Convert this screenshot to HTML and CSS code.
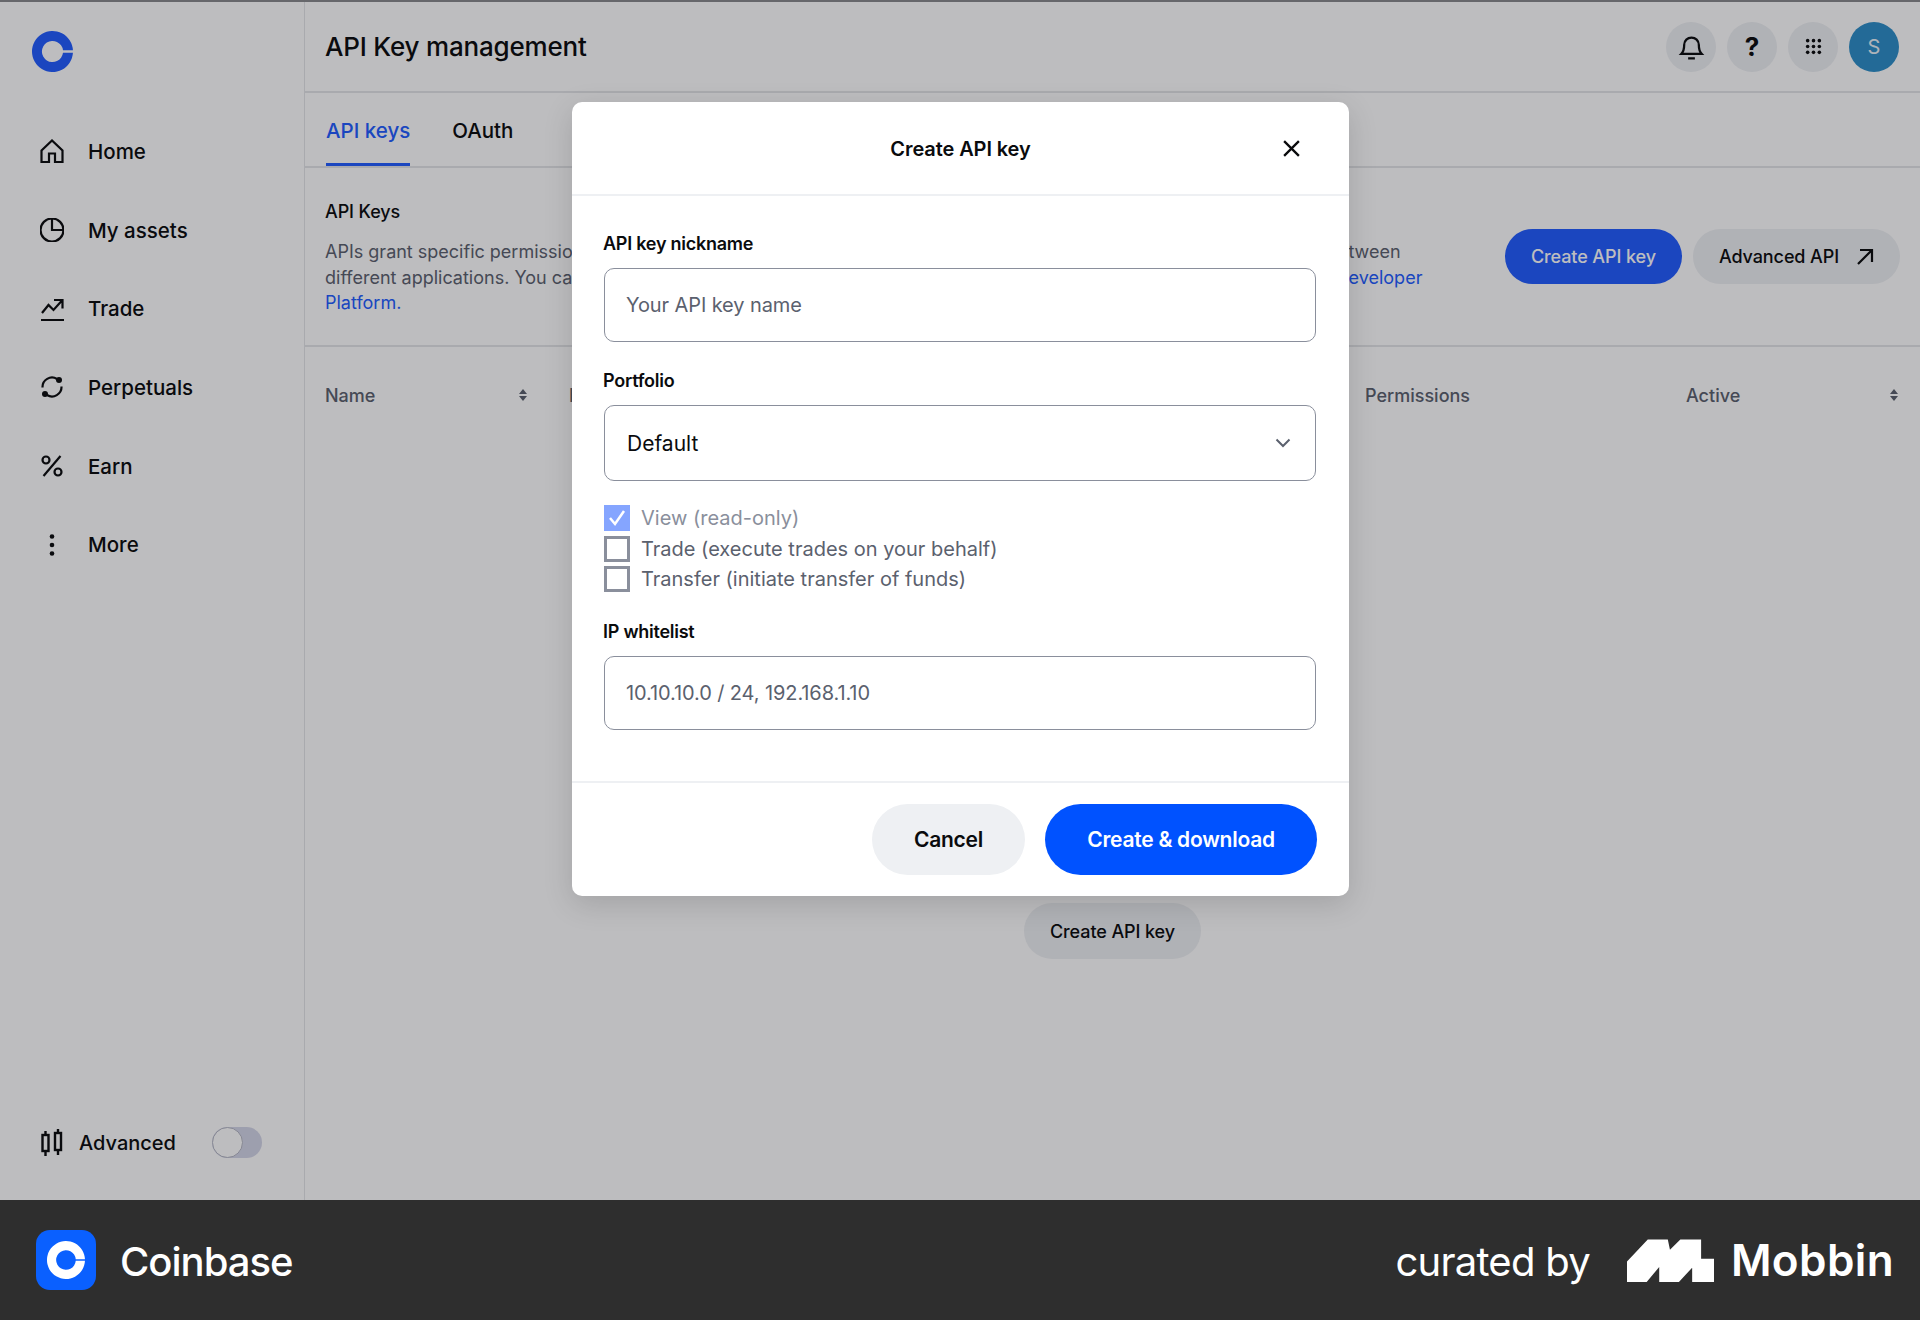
FILE: index.html
```html
<!DOCTYPE html>
<html lang="en">
<head>
    <meta charset="UTF-8">
    <meta name="viewport" content="width=device-width, initial-scale=1.0">
    <title>API Key management</title>
    <link rel="stylesheet" href="styles.css">
</head>
<body>
    <div class="app">
        <aside class="sidebar">
            <svg class="logo" viewBox="0 0 24 24"><path fill-rule="evenodd" d="M23.97 11.2A12 12 0 1 0 23.97 12.8H18.15A6.2 6.2 0 1 1 18.15 11.2Z"/></svg>
            <nav class="nav">
                <a class="nav-item">
                    <svg class="icon" viewBox="0 0 24 24"><path d="M1.5 11.5 12 1.5l10.500 10V23H15V14.500H9V23H1.500Z"/></svg>
                    <span>Home</span>
                </a>
                <a class="nav-item">
                    <svg class="icon" viewBox="0 0 24 24"><circle cx="12" cy="12" r="11.500"/><path d="M12 1v11h11"/></svg>
                    <span>My assets</span>
                </a>
                <a class="nav-item">
                    <svg class="icon" viewBox="0 0 24 24"><path d="M1 23h23M2 16l6.500-8 5 5 8.500-9.500M14 3h8.500v8.500"/></svg>
                    <span>Trade</span>
                </a>
                <a class="nav-item">
                    <svg class="icon" viewBox="0 0 24 24"><path d="M2.500 12.500A9.500 9.500 0 0 1 17 4M21.500 11.500A9.500 9.500 0 0 1 7 20"/><circle class="solid" cx="19" cy="5" r="3"/><circle class="solid" cx="5" cy="19" r="3"/></svg>
                    <span>Perpetuals</span>
                </a>
                <a class="nav-item">
                    <svg class="icon" viewBox="0 0 24 24"><path d="M20.500 2 3.500 22"/><circle cx="6" cy="6" r="3.500"/><circle cx="18" cy="18" r="3.500"/></svg>
                    <span>Earn</span>
                </a>
                <a class="nav-item">
                    <svg class="icon" viewBox="0 0 24 24"><circle class="solid" cx="12" cy="3.500" r="2.300"/><circle class="solid" cx="12" cy="12" r="2.300"/><circle class="solid" cx="12" cy="20.500" r="2.300"/></svg>
                    <span>More</span>
                </a>
            </nav>
            <div class="advanced">
                <svg class="candles" viewBox="0 0 22 29"><path d="M4.500 3v5M4.500 23v5M17 1v5M17 22v5"/><rect x="1.500" y="7" width="6" height="16"/><rect x="14" y="5" width="6" height="17"/></svg>
                <span class="advanced-label">Advanced</span>
                <span class="toggle"><span class="knob"></span></span>
            </div>
        </aside>

        <main class="main">
            <header class="topbar">
                <h1>API Key management</h1>
                <div class="top-actions">
                    <span class="round">
                        <svg class="bell" viewBox="0 0 24 24"><path d="M3 18.500c2-2 2.500-3.500 2.500-8a6.500 6.500 0 0 1 13 0c0 4.500.5 6 2.500 8ZM9 22.500h6"/></svg>
                    </span>
                    <span class="round question">?</span>
                    <span class="round">
                        <svg class="grid" viewBox="0 0 16 16"><circle cx="2.500" cy="2.500" r="1.700"/><circle cx="8" cy="2.500" r="1.700"/><circle cx="13.500" cy="2.500" r="1.700"/><circle cx="2.500" cy="8" r="1.700"/><circle cx="8" cy="8" r="1.700"/><circle cx="13.500" cy="8" r="1.700"/><circle cx="2.500" cy="13.500" r="1.700"/><circle cx="8" cy="13.500" r="1.700"/><circle cx="13.500" cy="13.500" r="1.700"/></svg>
                    </span>
                    <span class="round avatar">S</span>
                </div>
            </header>

            <div class="tabs">
                <a class="tab active">API keys</a>
                <a class="tab">OAuth</a>
            </div>

            <section class="intro">
                <div class="intro-text">
                    <h2>API Keys</h2>
                    <p>APIs grant specific permissions to third-party applications and services, allowing them to securely communicate data between<br>different applications. You can create, view, hide and manage all of your API keys at any time from within the <a class="link">Coinbase Developer<br>Platform.</a></p>
                </div>
                <div class="intro-actions">
                    <button class="btn btn-primary">Create API key</button>
                    <button class="btn btn-grey">Advanced API
                        <svg class="arrow" viewBox="0 0 18 18"><path d="M2 16 16 2M4 2h12v12"/></svg>
                    </button>
                </div>
            </section>

            <div class="table-head">
                <span class="col col-name">Name <svg class="sort" viewBox="0 0 8 12"><path d="M4 0 8 5H0ZM4 12 8 7H0Z"/></svg></span>
                <span class="col col-nick">Nickname</span>
                <span class="col col-perm">Permissions</span>
                <span class="col col-active">Active <svg class="sort" viewBox="0 0 8 12"><path d="M4 0 8 5H0ZM4 12 8 7H0Z"/></svg></span>
            </div>

            <div class="empty">
                <button class="btn btn-grey">Create API key</button>
            </div>
        </main>

        <div class="scrim">
            <div class="modal">
                <div class="modal-head">
                    <h3>Create API key</h3>
                    <svg class="close" viewBox="0 0 18 18"><path d="M2 2l14 14M16 2 2 16"/></svg>
                </div>
                <div class="modal-body">
                    <label class="field-label">API key nickname</label>
                    <div class="input placeholder">Your API key name</div>

                    <label class="field-label label-gap">Portfolio</label>
                    <div class="input select">
                        <span>Default</span>
                        <svg class="chevron" viewBox="0 0 16 10"><path d="M1.500 1.500 8 8l6.500-6.500"/></svg>
                    </div>

                    <div class="checks">
                        <div class="check disabled">
                            <span class="box on"><svg viewBox="0 0 26 26"><path d="M6 13l5 6L20 6"/></svg></span>
                            View (read-only)
                        </div>
                        <div class="check"><span class="box"></span>Trade (execute trades on your behalf)</div>
                        <div class="check"><span class="box"></span>Transfer (initiate transfer of funds)</div>
                    </div>

                    <label class="field-label">IP whitelist</label>
                    <div class="input placeholder">10.10.10.0 / 24, 192.168.1.10</div>
                </div>
                <div class="modal-foot">
                    <button class="btn-large btn-cancel">Cancel</button>
                    <button class="btn-large btn-create">Create &amp; download</button>
                </div>
            </div>
        </div>
    </div>

    <footer class="credit">
        <div class="credit-left">
            <span class="app-icon">
                <svg viewBox="0 0 24 24"><path fill-rule="evenodd" d="M23.97 11.500A12 12 0 1 0 23.97 12.500H18.150A6.200 6.200 0 1 1 18.150 11.500Z"/></svg>
            </span>
            <span class="app-name">Coinbase</span>
        </div>
        <div class="credit-right">
            <span class="curated">curated by</span>
            <svg class="mobbin-mark" viewBox="748 120 243 120"><path d="M748 183 806 121H862L868 150 897 121H955V175H991V240H930V200L893 240H838V198L803 240H748Z"/></svg>
            <span class="mobbin">Mobbin</span>
        </div>
    </footer>
</body>
</html>
```

FILE: styles.css
```css
* {
    box-sizing: border-box;
}
body {
    margin: 0;
    width: 1920px;
    height: 1320px;
    overflow: hidden;
    background: #fff;
    color: #0a0b0d;
    font-family: Inter, "Noto Sans", sans-serif;
}
h1, h2, h3, p {
    margin: 0;
}
button {
    font-family: inherit;
    border: 0;
}

.app {
    position: relative;
    display: flex;
    height: 1200px;
    border-top: 2px solid #66676b;
}

/* sidebar */
.sidebar {
    width: 305px;
    flex-shrink: 0;
    display: flex;
    flex-direction: column;
    border-right: 1px solid #e4e5e8;
}
.logo {
    width: 41px;
    height: 41px;
    margin: 29px 0 0 32px;
    fill: #215cff;
}
.nav {
    display: flex;
    flex-direction: column;
    margin-top: 40px;
}
.nav-item {
    display: flex;
    align-items: center;
    height: 78.700px;
    padding-left: 40px;
    font-size: 20.500px;
    font-weight: 500;
}
.icon {
    width: 24px;
    height: 24px;
    margin-right: 24px;
    fill: none;
    stroke: #0a0b0d;
    stroke-width: 2.200;
}
.icon .solid {
    fill: #0a0b0d;
    stroke: none;
}
.advanced {
    display: flex;
    align-items: center;
    margin-top: auto;
    padding: 0 0 42px 41px;
    font-size: 20px;
    font-weight: 500;
}
.candles {
    width: 22px;
    height: 29px;
    margin-right: 16px;
    fill: none;
    stroke: #0a0b0d;
    stroke-width: 2.400;
}
.advanced-label {
    width: 133px;
}
.toggle {
    display: block;
    width: 50px;
    height: 31px;
    border-radius: 16px;
    background: #d4d6e8;
}
.knob {
    display: block;
    width: 31px;
    height: 31px;
    border-radius: 50%;
    background: #fff;
    border: 1px solid #b5b7c4;
}

/* main column */
.main {
    flex: 1;
    display: flex;
    flex-direction: column;
}
.topbar {
    display: flex;
    align-items: center;
    justify-content: space-between;
    height: 91px;
    padding: 0 21px 0 20px;
    border-bottom: 2px solid #e4e5e8;
}
.topbar h1 {
    font-size: 26px;
    font-weight: 500;
    letter-spacing: -0.200px;
}
.top-actions {
    display: flex;
    gap: 11px;
}
.round {
    display: flex;
    align-items: center;
    justify-content: center;
    width: 50px;
    height: 50px;
    border-radius: 50%;
    background: #eef0f3;
}
.bell {
    width: 27px;
    height: 29px;
    fill: none;
    stroke: #0a0b0d;
    stroke-width: 2;
}
.question {
    font-size: 26px;
    font-weight: 700;
}
.grid {
    width: 17px;
    height: 17px;
    fill: #0a0b0d;
}
.avatar {
    background: #2c8ec8;
    color: #eaf2f8;
    font-size: 20px;
}

.tabs {
    display: flex;
    gap: 42px;
    height: 75px;
    padding-left: 21px;
    border-bottom: 2px solid #e4e5e8;
}
.tab {
    height: 73px;
    padding-top: 25px;
    font-size: 20.500px;
    font-weight: 500;
}
.tab.active {
    color: #215cff;
    border-bottom: 3px solid #215cff;
}

.intro {
    display: flex;
    justify-content: space-between;
    height: 179px;
    padding: 32px 20px 0 20px;
    border-bottom: 2px solid #e4e5e8;
}
.intro-text h2 {
    font-size: 18px;
    line-height: 24px;
    font-weight: 500;
    letter-spacing: -0.100px;
}
.intro-text p {
    margin-top: 15px;
    font-size: 18px;
    line-height: 25.500px;
    color: #5b616e;
    white-space: nowrap;
}
.link {
    color: #215cff;
}
.intro-actions {
    display: flex;
    gap: 11px;
    margin-top: 29px;
}
.intro-actions .btn {
    height: 55px;
}
.btn {
    display: flex;
    align-items: center;
    height: 56px;
    padding: 0 26px;
    border-radius: 28px;
    font-size: 18px;
    font-weight: 500;
    letter-spacing: -0.100px;
}
.btn-primary {
    background: #215cff;
    color: #fff;
}
.btn-grey {
    background: #eef0f3;
    color: #0a0b0d;
}
.arrow {
    width: 18px;
    height: 18px;
    margin-left: 17px;
    fill: none;
    stroke: #0a0b0d;
    stroke-width: 2.200;
}

.table-head {
    position: relative;
    display: flex;
    height: 96px;
    align-items: center;
    padding-left: 20px;
    font-size: 18px;
    font-weight: 500;
    color: #5b616e;
}
.col {
    display: flex;
    align-items: center;
    justify-content: space-between;
}
.col-name {
    width: 202px;
}
.col-nick {
    width: 796px;
    margin-left: 42px;
}
.col-perm {
    width: 321px;
}
.col-active {
    width: 212px;
}
.sort {
    width: 8px;
    height: 12px;
    fill: #5b616e;
}
.empty {
    display: flex;
    justify-content: center;
    padding-top: 460px;
}

/* dialog */
.scrim {
    position: absolute;
    inset: 0;
    display: flex;
    justify-content: center;
    align-items: flex-start;
    padding-top: 100px;
    background: rgba(10, 12, 18, 0.272);
}
.modal {
    width: 777px;
    height: 794px;
    margin-left: 1px;
    background: #fff;
    border-radius: 10px;
    box-shadow: 0 8px 30px rgba(0, 0, 0, 0.14);
}
.modal-head {
    position: relative;
    display: flex;
    align-items: center;
    justify-content: center;
    height: 94px;
    padding-top: 2px;
    border-bottom: 2px solid #eef0f3;
}
.modal-head h3 {
    font-size: 20px;
    font-weight: 600;
    letter-spacing: -0.100px;
}
.close {
    position: absolute;
    right: 48px;
    top: 37px;
    width: 19px;
    height: 19px;
    fill: none;
    stroke: #0a0b0d;
    stroke-width: 2.200;
}
.modal-body {
    height: 587px;
    padding: 36px 33px 0 32px;
    border-bottom: 2px solid #eef0f3;
}
.field-label {
    display: block;
    margin-left: -1px;
    font-size: 18px;
    line-height: 24px;
    font-weight: 600;
    letter-spacing: -0.250px;
}
.label-gap {
    margin-top: 27px;
}
.input {
    display: flex;
    align-items: center;
    height: 74px;
    margin-top: 12px;
    padding: 0 21px;
    border: 1.500px solid #8a8f9c;
    border-radius: 10px;
    font-size: 20px;
}
.placeholder {
    color: #5b616e;
    letter-spacing: -0.100px;
}
.select {
    justify-content: space-between;
    height: 76px;
    padding: 0 24px 0 22px;
    font-size: 21px;
}
.chevron {
    width: 16px;
    height: 10px;
    fill: none;
    stroke: #5b616e;
    stroke-width: 2;
}
.checks {
    margin: 22px 0 25px;
}
.check {
    display: flex;
    align-items: center;
    gap: 11px;
    height: 30.500px;
    font-size: 20px;
    color: #5b616e;
}
.check.disabled {
    color: #8a8f9c;
}
.box {
    width: 26px;
    height: 26px;
    border: 3px solid #8a8f9c;
}
.box.on {
    border: 0;
    background: #85a5ff;
}
.box svg {
    display: block;
    fill: none;
    stroke: #fff;
    stroke-width: 2.500;
}
.modal-foot {
    display: flex;
    justify-content: flex-end;
    gap: 20px;
    padding: 21px 32px 0 0;
}
.btn-large {
    height: 71px;
    border-radius: 36px;
    font-size: 21px;
    font-weight: 600;
    letter-spacing: -0.250px;
}
.btn-cancel {
    width: 153px;
    background: #eef0f3;
    color: #0a0b0d;
}
.btn-create {
    width: 272px;
    background: #0052ff;
    color: #fff;
}

/* strip below the capture */
.credit {
    display: flex;
    align-items: center;
    justify-content: space-between;
    height: 120px;
    padding: 0 26px 0 36px;
    background: #2e2e2e;
    color: #fff;
}
.credit-left, .credit-right {
    display: flex;
    align-items: center;
}
.app-icon {
    display: flex;
    align-items: center;
    justify-content: center;
    width: 60px;
    height: 60px;
    border-radius: 14px;
    background: #0a60ff;
}
.app-icon svg {
    width: 38px;
    height: 38px;
    fill: #fff;
}
.app-name {
    margin: 2px 0 0 24px;
    font-size: 40px;
    font-weight: 500;
    letter-spacing: -1px;
}
.curated {
    margin-top: 3px;
    font-size: 40px;
    letter-spacing: -0.750px;
}
.mobbin-mark {
    width: 87px;
    height: 43px;
    margin-left: 37px;
    fill: #fff;
}
.mobbin {
    margin-left: 17px;
    font-size: 44px;
    font-weight: 600;
    letter-spacing: 0.400px;
}
```
